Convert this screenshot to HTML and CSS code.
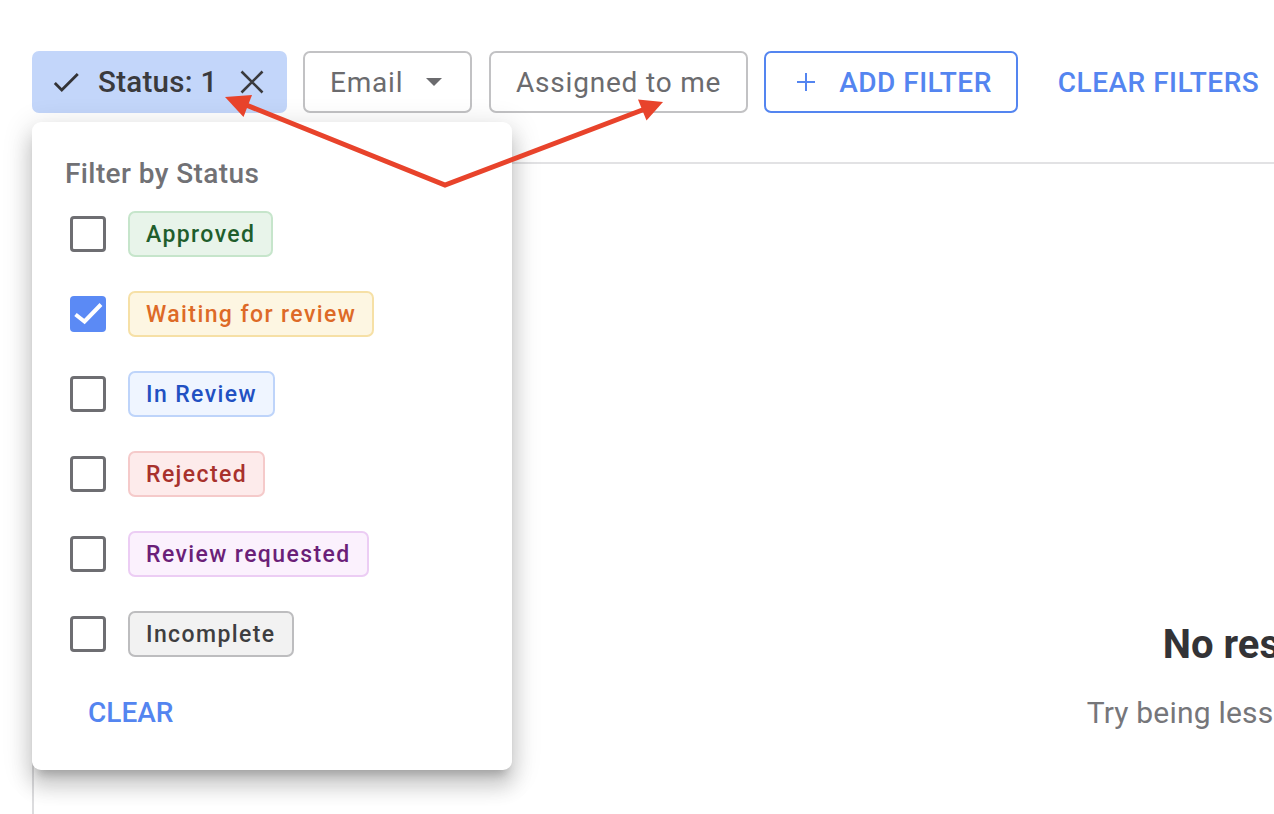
FILE: index.html
```html
<!DOCTYPE html>
<html lang="en">
<head>
<meta charset="utf-8">
<title>Filters</title>
<link rel="stylesheet" href="styles.css">
</head>
<body>
<div class="page">
  <div class="filters">
    <button class="filter-chip active">
      <svg class="ico-check" viewBox="0 0 24 24" width="34" height="34"><path d="M9 16.17L4.83 12l-1.42 1.41L9 19 21 7l-1.41-1.41z" fill="#333336"/></svg>
      <span class="label">Status: 1</span>
      <svg class="ico-close" viewBox="0 0 24 24" width="24" height="24"><path d="M1.5 1.5L22.5 22.5M22.5 1.5L1.5 22.5" stroke="#3a3a3d" stroke-width="2.6" fill="none"/></svg>
    </button>
    <button class="filter-chip outline email">
      <span class="label">Email</span>
      <svg class="ico-drop" viewBox="0 0 16 8" width="16" height="8"><path d="M0 0H16L8 8z" fill="#6b6b6e"/></svg>
    </button>
    <button class="filter-chip outline">
      <span class="label">Assigned to me</span>
    </button>
    <button class="filter-chip add">
      <svg class="ico-plus" viewBox="0 0 18 18" width="18" height="18"><path d="M9 0V18M0 9H18" stroke="#5485f0" stroke-width="2" fill="none"/></svg>
      <span class="label">ADD FILTER</span>
    </button>
    <button class="text-btn clear-filters">CLEAR FILTERS</button>
  </div>
  <div class="results">
    <div class="empty">
      <h2 class="empty-title">No results found</h2>
      <p class="empty-text">Try being less specific with filters</p>
    </div>
  </div>
</div>

<div class="popover">
  <div class="pop-title">Filter by Status</div>
  <ul class="status-list">
    <li class="status-row"><span class="cb"></span><span class="tag approved">Approved</span></li>
    <li class="status-row"><span class="cb checked"><svg viewBox="0 0 36 36" width="36" height="36"><path d="M5.5 18.5L14.5 25.5L31 8.5" stroke="#fff" stroke-width="4" fill="none"/></svg></span><span class="tag waiting">Waiting for review</span></li>
    <li class="status-row"><span class="cb"></span><span class="tag inreview">In Review</span></li>
    <li class="status-row"><span class="cb"></span><span class="tag rejected">Rejected</span></li>
    <li class="status-row"><span class="cb"></span><span class="tag requested">Review requested</span></li>
    <li class="status-row"><span class="cb"></span><span class="tag incomplete">Incomplete</span></li>
  </ul>
  <button class="text-btn clear">CLEAR</button>
</div>

<svg class="annotation" viewBox="0 0 1274 814" width="1274" height="814">
  <polyline points="240,102.5 445,185 645,109" fill="none" stroke="#e8432b" stroke-width="5" stroke-linejoin="miter"/>
  <polygon points="225,97 252,95 243.5,117" fill="#e8432b"/>
  <polygon points="663,102 638,99.5 646.5,120.5" fill="#e8432b"/>
</svg>
</body>
</html>
```

FILE: styles.css
```css
* { box-sizing: border-box; }
html, body {
  margin: 0;
  padding: 0;
  background: #fff;
  width: 1274px;
  height: 814px;
  overflow: hidden;
}
body {
  font-family: Roboto, "Liberation Sans", Arial, sans-serif;
  position: relative;
}
button {
  font-family: inherit;
  cursor: pointer;
}
.page {
  padding: 51px 0 0 32px;
  height: 814px;
  display: flex;
  flex-direction: column;
}
.filters {
  display: flex;
  align-items: center;
  gap: 17px;
  height: 62px;
}
.filter-chip {
  height: 62px;
  display: flex;
  align-items: center;
  border-radius: 7px;
  font-size: 28px;
  letter-spacing: 0.8px;
  background: #fff;
  border: 2px solid #c2c2c4;
  color: #6b6b6e;
  padding: 0 25px;
  white-space: nowrap;
}
.filter-chip.active {
  background: #c3d6fa;
  border: none;
  color: #3a3a3d;
  font-weight: 500;
  letter-spacing: 0.3px;
  padding: 0 23px 0 17px;
  width: 255px;
  margin-right: -1px;
}
.filter-chip.active .label { margin-left: 15px; font-size: 29.5px; }
.filter-chip.active .ico-close { margin-left: auto; }
.filter-chip.email { width: 169px; }
.filter-chip.email .ico-drop { margin-left: auto; margin-right: 3px; }
.filter-chip.add {
  border-color: #5485f0;
  color: #5485f0;
  font-weight: 500;
  letter-spacing: 0.5px;
  padding: 0 24px 0 31px;
  margin-left: -1px;
}
.filter-chip.add .label { margin-left: 24px; }
.text-btn {
  background: none;
  border: none;
  color: #5485f0;
  font-weight: 500;
  font-size: 28px;
  padding: 0;
  white-space: nowrap;
}
.clear-filters { margin-left: 23px; letter-spacing: 0.5px; }

.results {
  margin-top: 49px;
  flex: 1;
  width: 2558px;
  border-top: 2px solid #e2e2e4;
  border-left: 2px solid #dcdcde;
  padding-top: 457px;
}
.empty {
  display: flex;
  flex-direction: column;
  align-items: center;
}
.empty-title {
  margin: 0;
  font-size: 40px;
  line-height: 48px;
  font-weight: 700;
  color: #333336;
}
.empty-text {
  margin: 24px 0 0;
  font-size: 30px;
  line-height: 40px;
  letter-spacing: 0.2px;
  color: #76767a;
}

.popover {
  position: absolute;
  left: 32px;
  top: 122px;
  width: 480px;
  height: 648px;
  background: #fff;
  border-radius: 9px;
  padding: 32px 33px 0;
  box-shadow: 0 10px 10px -6px rgba(0,0,0,0.2), 0 16px 20px 2px rgba(0,0,0,0.14), 0 6px 28px 4px rgba(0,0,0,0.12);
}
.pop-title {
  font-size: 28px;
  line-height: 40px;
  color: #717175;
  font-weight: 500;
  letter-spacing: 0.4px;
}
.status-list {
  list-style: none;
  margin: 0;
  padding: 0;
}
.status-row {
  height: 80px;
  display: flex;
  align-items: center;
  padding-left: 5px;
}
.cb {
  width: 36px;
  height: 36px;
  border: 3.5px solid #6e6e72;
  border-radius: 4px;
  flex: none;
  display: flex;
}
.cb.checked {
  background: #5b8af5;
  border: none;
}
.tag {
  margin-left: 22px;
  height: 46px;
  display: inline-flex;
  align-items: center;
  padding: 0 16px;
  border: 2px solid;
  border-radius: 7px;
  font-size: 23px;
  font-weight: 500;
  letter-spacing: 1.4px;
}
.tag.approved { background: #e8f4ea; border-color: #c6e5cb; color: #1f5e2c; }
.tag.waiting { background: #fdf6e2; border-color: #f6e0a6; color: #dd6a27; }
.tag.inreview { background: #eff5ff; border-color: #bed4fa; color: #2150c2; }
.tag.rejected { background: #fdebeb; border-color: #f5caca; color: #a8312c; }
.tag.requested { background: #fbf1fd; border-color: #eccdf4; color: #6b1f78; }
.tag.incomplete { background: #f2f2f2; border-color: #bdbdbf; color: #3e3e40; }
.clear {
  margin: 19px 0 0 23px;
  height: 40px;
  line-height: 40px;
  letter-spacing: 0;
}

.annotation {
  position: absolute;
  left: 0;
  top: 0;
  pointer-events: none;
}
```
